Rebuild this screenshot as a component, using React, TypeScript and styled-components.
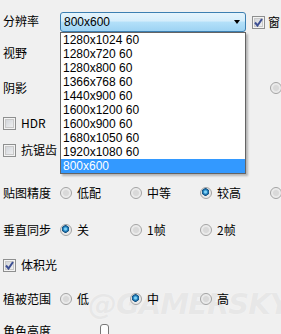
import React from 'react';
import styled, { createGlobalStyle } from 'styled-components';

const GlobalStyle = createGlobalStyle`
  html, body {
    margin: 0;
    padding: 0;
    background: #f0f0f0;
  }
  body {
    font-family: "Liberation Sans", "Noto Sans CJK SC", sans-serif;
    font-size: 12px;
    color: #000;
  }
`;

const Panel = styled.div`
  position: relative;
  width: 281px;
  height: 334px;
  overflow: hidden;
  padding-left: 3px;
  box-sizing: border-box;
  background: #f0f0f0;
`;

const Row = styled.div<{ $top: number }>`
  position: relative;
  z-index: 2;
  display: grid;
  grid-template-columns: 57px repeat(4, 70px);
  align-items: center;
  height: 20px;
  margin-top: ${({ $top }) => $top}px;
  white-space: nowrap;
`;

const TopRow = styled.div`
  position: relative;
  z-index: 3;
  display: flex;
  align-items: center;
  height: 20px;
  margin-top: 12px;
  white-space: nowrap;
`;

const Label = styled.span`
  font-family: "Noto Sans CJK SC", sans-serif;
  font-size: 12px;
  line-height: 14px;
`;

const LabelCell = styled(Label)`
  width: 57px;
  flex: none;
  margin-top: -3px;
`;

const Option = styled.label<{ $gap?: number }>`
  display: flex;
  align-items: center;
  gap: ${({ $gap }) => $gap ?? 5}px;
  font-family: "Liberation Sans", "Noto Sans CJK SC", sans-serif;
  font-size: 12px;
`;

const ComboWrap = styled.div`
  position: relative;
  width: 186px;
  height: 20px;
  flex: none;
  margin-right: 6px;
`;

const Combo = styled.div`
  box-sizing: border-box;
  height: 20px;
  border: 1px solid #3c7fb1;
  border-radius: 3px;
  background: linear-gradient(#e5f4fc 0%, #d4edfb 45%, #b4e0f9 50%, #9dd3f3 100%);
  display: flex;
  align-items: center;
  justify-content: space-between;
  padding: 0 4px 0 3px;
  font-size: 12px;
`;

const Arrow = styled.span`
  width: 0;
  height: 0;
  border-left: 3.5px solid transparent;
  border-right: 3.5px solid transparent;
  border-top: 4px solid #000;
  margin-right: 1px;
`;

const List = styled.ul`
  position: absolute;
  left: 0;
  top: 20px;
  z-index: 5;
  box-sizing: border-box;
  width: 186px;
  margin: 0;
  padding: 0;
  list-style: none;
  background: #fff;
  border: 1px solid #646464;
  box-shadow: 2px 2px 2px rgba(0, 0, 0, 0.25);
`;

const Item = styled.li<{ $selected?: boolean }>`
  height: 14px;
  line-height: 14px;
  padding-left: 2px;
  font-size: 12px;
  background: ${({ $selected }) => ($selected ? '#3399ff' : 'transparent')};
  color: ${({ $selected }) => ($selected ? '#fff' : '#000')};
`;

const Box = styled.span`
  box-sizing: border-box;
  width: 13px;
  height: 13px;
  flex: none;
  border: 1px solid #8e8f8f;
  box-shadow: inset 0 0 0 1px #f4f4f4, inset 0 0 0 2px #c9c9c9;
  background-image: linear-gradient(135deg, #cbcfd5, #f6f6f6);
  display: flex;
  align-items: center;
  justify-content: center;
`;

const Radio = styled.span<{ $checked?: boolean }>`
  box-sizing: border-box;
  width: 12px;
  height: 12px;
  flex: none;
  border-radius: 50%;
  border: 1px solid #a2a2a2;
  background: ${({ $checked }) =>
    $checked
      ? 'radial-gradient(circle at 45% 40%, #7fd3f7 0 1px, #2b8ac6 2px, #0f4d7e 3.5px, #e6e6e6 4px, #f2f2f2 100%)'
      : 'radial-gradient(circle at 50% 50%, #d9d9d9 0 2.5px, #e8e8e8 3.5px, #f7f7f7 100%)'};
`;

const Knob = styled.span`
  box-sizing: border-box;
  width: 9px;
  height: 14px;
  margin-left: 49px;
  border: 1px solid #777;
  border-radius: 3px 3px 0 0;
  background: #fdfdfd;
`;

const Watermark = styled.div`
  position: absolute;
  left: 88px;
  top: 287px;
  z-index: 1;
  font-family: "DejaVu Sans", sans-serif;
  font-weight: bold;
  font-style: italic;
  font-size: 29px;
  letter-spacing: -1px;
  color: #e7e7e7;
  text-shadow: 0 0 1px #fbfbfb;
  pointer-events: none;
`;

const WideCell = styled.div`
  grid-column: 1 / span 2;
  display: flex;
  align-items: flex-end;
`;

const Check = () => (
  <svg width="9" height="9" viewBox="0 0 9 9">
    <path d="M1 4.5 L3.5 7.5 L8 1" fill="none" stroke="#3d4f93" strokeWidth="2" />
  </svg>
);

const CheckOption = ({ checked, label, gap }: { checked?: boolean; label: string; gap?: number }) => (
  <Option $gap={gap}>
    <Box>{checked && <Check />}</Box>
    <Label>{label}</Label>
  </Option>
);

const RadioOption = ({ checked, label }: { checked?: boolean; label?: string }) => (
  <Option>
    <Radio $checked={checked} />
    {label && <Label>{label}</Label>}
  </Option>
);

const resolutions = [
  '1280x1024 60',
  '1280x720 60',
  '1280x800 60',
  '1366x768 60',
  '1440x900 60',
  '1600x1200 60',
  '1600x900 60',
  '1680x1050 60',
  '1920x1080 60',
  '800x600',
];

export default function App() {
  return (
    <>
      <GlobalStyle />
      <Panel>
        <Watermark>@GAMERSKY</Watermark>
        <TopRow>
          <LabelCell>分辨率</LabelCell>
          <ComboWrap>
            <Combo>
              <span>800x600</span>
              <Arrow />
            </Combo>
            <List>
              {resolutions.map((r) => (
                <Item key={r} $selected={r === '800x600'}>
                  {r}
                </Item>
              ))}
            </List>
          </ComboWrap>
          <CheckOption checked gap={3} label="窗口模式" />
        </TopRow>
        <Row $top={11}>
          <Label>视野</Label>
        </Row>
        <Row $top={15}>
          <Label>阴影</Label>
          <span />
          <span />
          <span />
          <RadioOption />
        </Row>
        <Row $top={15}>
          <WideCell>
            <CheckOption label="HDR" />
          </WideCell>
        </Row>
        <Row $top={7}>
          <WideCell>
            <CheckOption label="抗锯齿" />
          </WideCell>
        </Row>
        <Row $top={23}>
          <Label>贴图精度</Label>
          <RadioOption label="低配" />
          <RadioOption label="中等" />
          <RadioOption checked label="较高" />
          <RadioOption />
        </Row>
        <Row $top={17}>
          <Label>垂直同步</Label>
          <RadioOption checked label="关" />
          <RadioOption label="1帧" />
          <RadioOption label="2帧" />
        </Row>
        <Row $top={15}>
          <WideCell>
            <CheckOption checked label="体积光" />
          </WideCell>
        </Row>
        <Row $top={14}>
          <Label>植被范围</Label>
          <RadioOption label="低" />
          <RadioOption checked label="中" />
          <RadioOption label="高" />
        </Row>
        <Row $top={12}>
          <WideCell>
            <Label>角色高度</Label>
            <Knob />
          </WideCell>
        </Row>
      </Panel>
    </>
  );
}
